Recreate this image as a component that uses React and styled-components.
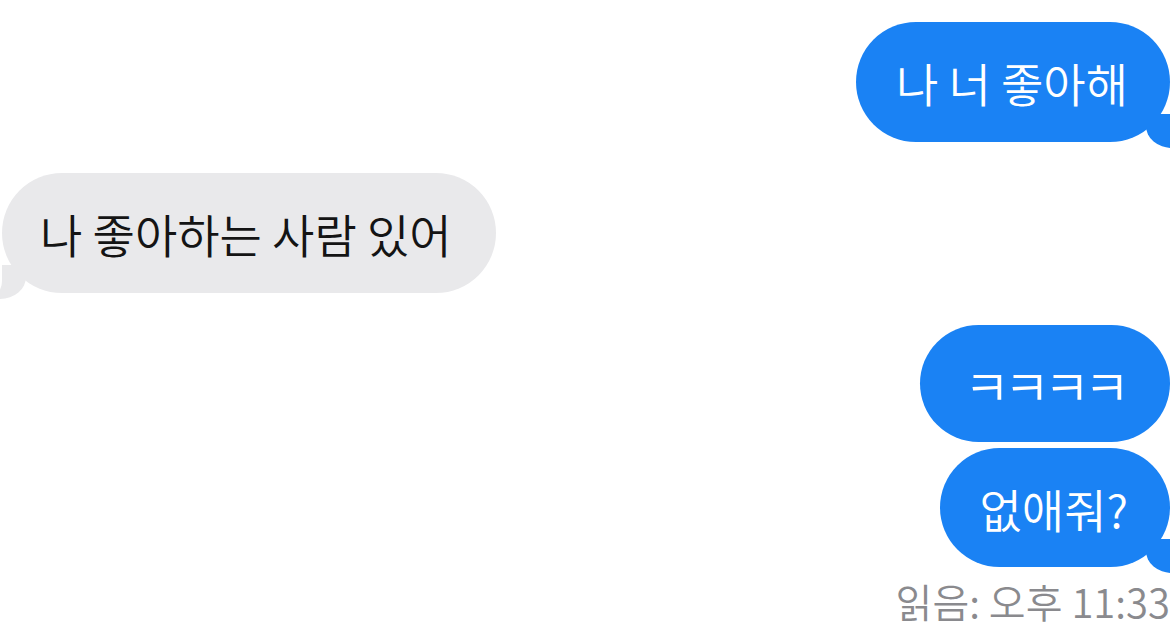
import React from "react"
import styled, { createGlobalStyle } from "styled-components"

const GlobalStyle = createGlobalStyle`
	html, body {
		margin: 0;
		padding: 0;
		background: #ffffff;
		overflow: hidden;
	}
	body {
		font-family: "Noto Sans CJK KR", "Noto Sans", sans-serif;
	}
`

const messages = [
	{ id: 1, mine: true, text: "나 너 좋아해", tail: true, gapTop: 22, height: 120 },
	{ id: 2, mine: false, text: "나 좋아하는 사람 있어", tail: true, gapTop: 31, height: 120 },
	{ id: 3, mine: true, text: "ㅋㅋㅋㅋ", tail: false, gapTop: 32, height: 117, small: true },
	{ id: 4, mine: true, text: "없애줘?", tail: true, gapTop: 6, height: 119 },
]

const App = () => {
	return (
		<>
			<GlobalStyle />
			<Screen>
				{messages.map((m) => (
					<Row key={m.id} $mine={m.mine} $gap={m.gapTop}>
						<Bubble $mine={m.mine} $tail={m.tail} $small={m.small} $h={m.height}>
							{m.text}
						</Bubble>
					</Row>
				))}
				<Receipt>읽음: 오후 11:33</Receipt>
			</Screen>
		</>
	)
}

const Screen = styled.main`
	width: 1170px;
	height: 640px;
	display: flex;
	flex-direction: column;
	overflow: hidden;
	background: #ffffff;
`

const Row = styled.div`
	display: flex;
	justify-content: ${(p) => (p.$mine ? "flex-end" : "flex-start")};
	margin-top: ${(p) => p.$gap}px;
	padding-left: ${(p) => (p.$mine ? "0" : "2px")};
`

const Bubble = styled.div`
	position: relative;
	display: inline-flex;
	align-items: center;
	height: ${(p) => p.$h}px;
	box-sizing: border-box;
	padding: ${(p) => (p.$small ? "0 46px 0 44px" : p.$mine ? "0 42px 0 40px" : "0 44px 0 38px")};
	border-radius: 60px;
	font-size: ${(p) => (p.$small ? "50px" : "46px")};
	letter-spacing: ${(p) => (p.$small ? "-6px" : "0")};
	font-weight: 350;
	line-height: 1;
	white-space: nowrap;
	color: ${(p) => (p.$mine ? "#ffffff" : "#141414")};
	background: ${(p) => (p.$mine ? "#1a82f4" : "#e9e9eb")};

	&::before {
		content: "";
		display: ${(p) => (p.$tail ? "block" : "none")};
		position: absolute;
		bottom: -6px;
		${(p) => (p.$mine ? "right: -10px;" : "left: -10px;")}
		width: 34px;
		height: 34px;
		background: ${(p) => (p.$mine ? "#1a82f4" : "#e9e9eb")};
		${(p) =>
			p.$mine
				? "border-bottom-left-radius: 26px 22px;"
				: "border-bottom-right-radius: 26px 22px;"}
	}

	&::after {
		content: "";
		display: ${(p) => (p.$tail ? "block" : "none")};
		position: absolute;
		bottom: -6px;
		${(p) => (p.$mine ? "right: -34px;" : "left: -34px;")}
		width: 34px;
		height: 36px;
		background: #ffffff;
		${(p) =>
			p.$mine
				? "border-bottom-left-radius: 18px;"
				: "border-bottom-right-radius: 18px;"}
	}
`

const Receipt = styled.div`
	align-self: flex-end;
	margin-top: 14px;
	margin-right: 0;
	font-size: 40px;
	font-weight: 350;
	line-height: 1;
	color: #8a8a8e;
	white-space: nowrap;
`

export default App
